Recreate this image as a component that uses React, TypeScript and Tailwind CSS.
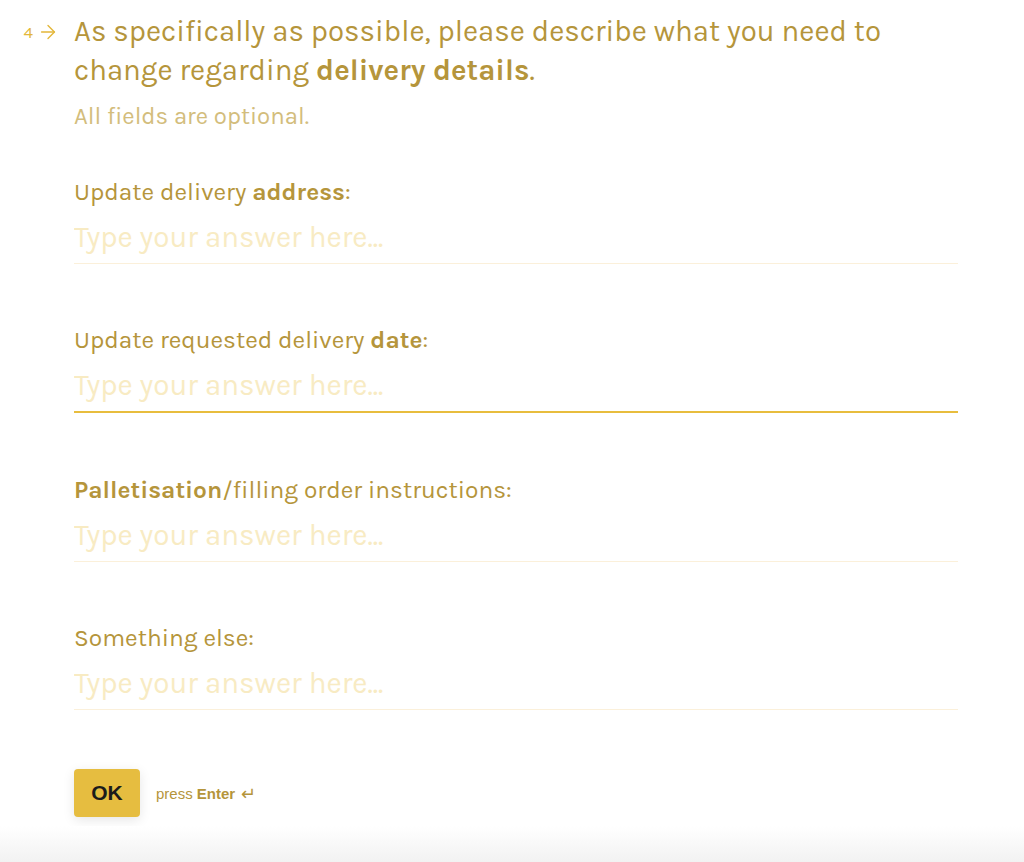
import { ArrowRight } from 'lucide-react';

const fields = [
  { pre: 'Update delivery ', bold: 'address', post: ':', focused: false },
  { pre: 'Update requested delivery ', bold: 'date', post: ':', focused: true },
  { pre: '', bold: 'Palletisation', post: '/filling order instructions:', focused: false },
  { pre: 'Something else:', bold: '', post: '', focused: false },
];

function Field({ pre, bold, post, focused }: (typeof fields)[number]) {
  return (
    <div className="flex flex-col">
      <label className="text-[24.5px] leading-[32px] text-[#b5953b]">
        {pre}
        {bold && <span className="font-bold">{bold}</span>}
        {post}
      </label>
      <div
        className={
          focused
            ? 'mt-[11px] h-[46px] border-b-2 border-[#e8bd3e]'
            : 'mt-[11px] h-[45px] border-b border-[#fbf0da]'
        }
      >
        <input
          className="h-[36px] w-full bg-transparent text-[29.5px] leading-[36px] text-[#b5953b] outline-none placeholder:text-[#f8ebc3]"
          placeholder="Type your answer here..."
        />
      </div>
    </div>
  );
}

export default function App() {
  return (
    <div className="relative h-[862px] w-[1024px] overflow-hidden bg-white font-['Karla','Lato',sans-serif]">
      <div className="flex pt-[12px]">
        <div className="flex w-[74px] shrink-0 items-center justify-end gap-[4px] self-start pr-[15px] pt-[9px] text-[#e3b73a]">
          <span className="text-[17px] leading-[20px]">4</span>
          <ArrowRight size={22} strokeWidth={1.5} />
        </div>
        <div className="w-[884px]">
          <h1 className="text-[29.4px] leading-[39px] text-[#b5953b]">
            As specifically as possible, please describe what you need to change regarding{' '}
            <span className="font-bold">delivery details</span>.
          </h1>
          <p className="mt-[10px] text-[24px] leading-[32px] text-[#d3bd7c]">All fields are optional.</p>

          <div className="mt-[44px] flex flex-col gap-[60.3px]">
            {fields.map((f, i) => (
              <Field key={i} {...f} />
            ))}
          </div>

          <div className="mt-[59px] flex items-center gap-[16px]">
            <button className="h-[48px] w-[66px] rounded-[4px] bg-[#e6bd40] font-['Liberation_Sans',sans-serif] text-[21px] font-bold text-[#1b1b1b] shadow-[0_3px_12px_rgba(0,0,0,0.1)]">
              OK
            </button>
            <span className="flex items-center gap-[6px] pt-[2px] font-['Liberation_Sans',sans-serif] text-[15px] text-[#b5953b]">
              <span>
                press <span className="font-bold">Enter</span>
              </span>
              <span className="text-[18px] leading-none">↵</span>
            </span>
          </div>
        </div>
      </div>
      <div className="absolute bottom-0 left-0 h-[36px] w-full bg-gradient-to-b from-white to-[#f2f2f2]" />
    </div>
  );
}
